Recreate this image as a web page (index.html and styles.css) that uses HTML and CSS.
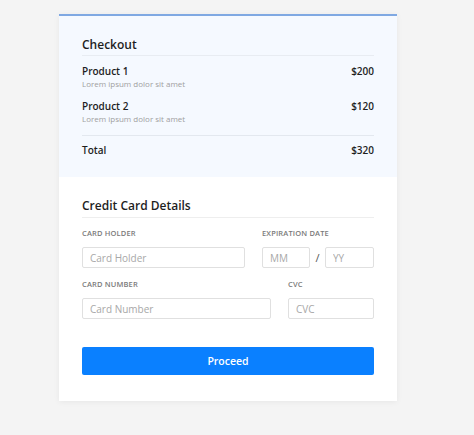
FILE: index.html
```html
<!DOCTYPE html>
<html lang="en">
<head>
<meta charset="utf-8">
<title>Checkout</title>
<link rel="stylesheet" href="styles.css">
</head>
<body>
<div class="card">
  <section class="summary">
    <h2 class="title">Checkout</h2>
    <div class="items">
      <div class="item">
        <div class="item-row"><span class="name">Product 1</span><span class="price">$200</span></div>
        <div class="desc">Lorem ipsum dolor sit amet</div>
      </div>
      <div class="item">
        <div class="item-row"><span class="name">Product 2</span><span class="price">$120</span></div>
        <div class="desc">Lorem ipsum dolor sit amet</div>
      </div>
    </div>
    <div class="total"><span class="name">Total</span><span class="price">$320</span></div>
  </section>
  <section class="details">
    <h2 class="title">Credit Card Details</h2>
    <div class="row row-1">
      <div class="field">
        <label class="label">Card Holder</label>
        <input class="input" type="text" placeholder="Card Holder">
      </div>
      <div class="field">
        <label class="label">Expiration Date</label>
        <div class="exp">
          <input class="input" type="text" placeholder="MM">
          <span class="slash">/</span>
          <input class="input" type="text" placeholder="YY">
        </div>
      </div>
    </div>
    <div class="row row-2">
      <div class="field">
        <label class="label">Card Number</label>
        <input class="input" type="text" placeholder="Card Number">
      </div>
      <div class="field">
        <label class="label">CVC</label>
        <input class="input" type="text" placeholder="CVC">
      </div>
    </div>
    <button class="btn" type="button">Proceed</button>
  </section>
</div>
</body>
</html>
```
FILE: styles.css
```css
* { box-sizing: border-box; }
html, body { margin: 0; padding: 0; }
body {
  background: #f4f4f4;
  font-family: "Open Sans", "DejaVu Sans", sans-serif;
  color: #222;
  padding: 14px 0 0 59px;
  min-height: 435px;
}
.card {
  width: 338px;
  background: #fff;
  border-top: 2px solid #7fa8e2;
  box-shadow: 0 1px 6px rgba(0,0,0,0.06);
}
.title {
  margin: 0;
  font-size: 12px;
  line-height: 16px;
  font-weight: 600;
  color: #1e1e1e;
  border-bottom: 1px solid #e8ecf2;
}
.summary {
  background: #f5f9ff;
  padding: 21px 23px 20px 23px;
}
.summary .title { padding-bottom: 2px; }
.items {
  padding-bottom: 10px;
  border-bottom: 1px solid #e3e8ef;
}
.item { margin-top: 8px; }
.item + .item { margin-top: 9px; }
.item-row, .total {
  display: flex;
  justify-content: space-between;
  font-size: 10px;
  line-height: 14px;
  font-weight: 600;
  color: #1e1e1e;
}
.desc {
  font-size: 8px;
  line-height: 12px;
  color: #a0a0a0;
}
.total { padding-top: 7px; }
.details {
  padding: 21px 23px 26px 23px;
}
.details .title { padding-bottom: 3px; border-bottom-color: #eeeeee; }
.row {
  display: grid;
  column-gap: 17px;
}
.row-1 { grid-template-columns: 163px 1fr; margin-top: 10px; }
.row-2 { grid-template-columns: 189px 1fr; margin-top: 11px; }
.field { display: flex; flex-direction: column; }
.label {
  font-size: 7.5px;
  line-height: 10px;
  font-weight: 600;
  letter-spacing: 0.15px;
  text-transform: uppercase;
  color: #7a7a7a;
  margin-bottom: 9px;
}
.input {
  width: 100%;
  height: 21px;
  border: 1px solid #e0e0e0;
  border-radius: 2px;
  background: #fff;
  padding: 0 7px;
  font-family: inherit;
  font-size: 10px;
  color: #333;
  outline: none;
}
.input::placeholder { color: #a8a8a8; }
.exp {
  display: grid;
  grid-template-columns: 48px 1fr 49px;
  align-items: center;
}
.slash {
  text-align: center;
  font-size: 11px;
  color: #555;
}
.btn {
  display: block;
  width: 100%;
  height: 28px;
  margin-top: 28px;
  border: 0;
  border-radius: 2px;
  background: #0a80ff;
  color: #fff;
  font-family: inherit;
  font-size: 10.5px;
  font-weight: 600;
}
```
